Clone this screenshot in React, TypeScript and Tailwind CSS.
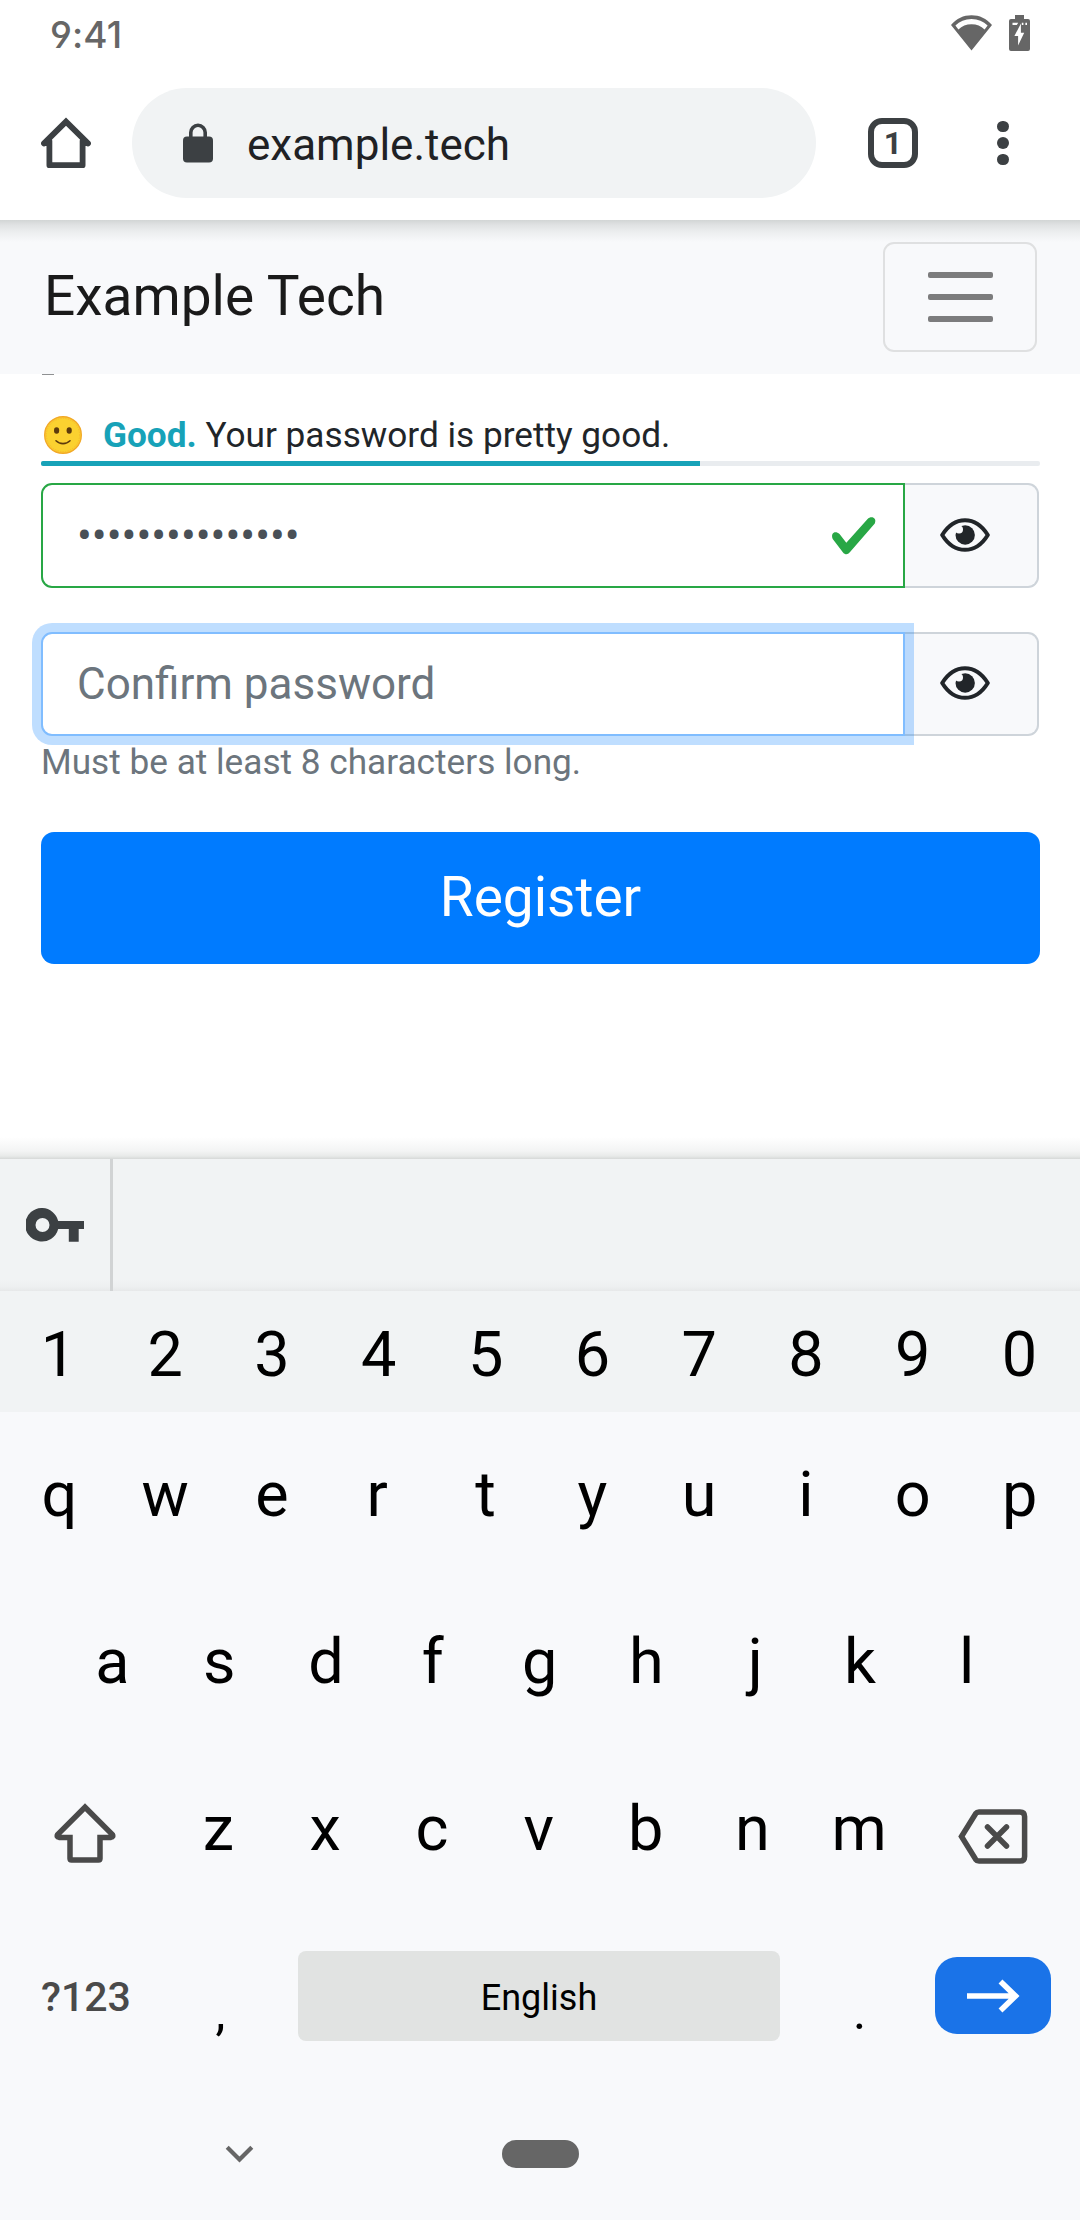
import React from "react";

const HomeIcon = () => (
  <svg className="h-[52px] w-[52px]" viewBox="0 0 52 52" fill="none" stroke="#3c4043" strokeWidth="5.8" strokeLinejoin="round" strokeLinecap="round">
    <path d="M4 26.4 26 4.6 48 26.4" strokeLinejoin="miter" />
    <path d="M9.4 24v24.2h33.2V24" />
    <path d="M5 27h4M43 27h4" strokeWidth="4" />
  </svg>
);

const LockIcon = () => (
  <svg className="h-10 w-[30px]" viewBox="0 0 30 40">
    <rect x="0" y="13.5" width="30" height="26" rx="4" fill="#3c4043" />
    <path d="M7.8 16V9.5a7.2 7.2 0 0 1 14.4 0V16" fill="none" stroke="#3c4043" strokeWidth="3.6" />
  </svg>
);

const WifiIcon = () => (
  <svg className="h-9 w-[41px]" viewBox="0 0 41 36">
    <path
      fillRule="evenodd"
      fill="#666"
      d="M20.5 35.5 0 10C5.500 3.500 12.500.300 20.500.300S35.500 3.500 41 10ZM7.400 14.600 4.400 10.500C8.600 6.200 14 4 20.500 4s11.900 2.200 16.100 6.500l-3 4.100C30 11 25.800 9.200 20.500 9.200S11 11 7.400 14.600Z"
    />
  </svg>
);

const BatteryIcon = () => (
  <svg className="h-9 w-[21px]" viewBox="0 0 21 36">
    <path d="M6 0h9v4H19a2 2 0 0 1 2 2v28a2 2 0 0 1-2 2H2a2 2 0 0 1-2-2V6a2 2 0 0 1 2-2h4Z" fill="#666" />
    <path d="M3.500 7.700h5.700l-1.400 2.200H3.500ZM12.800 7.700h1.600v2.200h-1.600ZM16.400 7.700H18v2.200h-1.600Z" fill="#fff" />
    <path d="M11.900 8.500v9.300h3.300L9.100 30.400v-9.300H5.400Z" fill="#fff" />
  </svg>
);

const EyeIcon = () => (
  <svg className="h-[34px] w-[50px]" viewBox="0 0 50 34">
    <path
      d="M2.200 17C8 7.600 15.800 2.200 25 2.200S42 7.600 47.800 17C42 26.400 34.200 31.800 25 31.800S8 26.400 2.200 17Z"
      fill="none"
      stroke="#212529"
      strokeWidth="4"
      strokeLinejoin="round"
    />
    <circle cx="25.200" cy="17" r="9.700" fill="#212529" />
    <circle cx="19" cy="11.500" r="4" fill="#f8f9fb" />
  </svg>
);

const CheckIcon = () => (
  <svg className="size-[49.5px]" viewBox="0 0 8 8">
    <path fill="#28a745" d="M2.300 6.730L.6 4.530c-.4-1.040.46-1.400 1.100-.8l1.100 1.400 3.400-3.800c.6-.63 1.600-.27 1.200.7l-4 4.600c-.43.5-.8.4-1.100.1z" />
  </svg>
);

const SmileIcon = () => (
  <svg className="size-[38px]" viewBox="0 0 38 38">
    <circle cx="19" cy="19" r="18.300" fill="#fbd130" stroke="#f2a928" strokeWidth="1.400" />
    <circle cx="19" cy="19" r="16.600" fill="none" stroke="#f5b92b" strokeWidth=".8" strokeDasharray="1.500 1" />
    <ellipse cx="12.600" cy="14.500" rx="2.600" ry="3.300" fill="#5c3a0c" />
    <ellipse cx="25.200" cy="14.500" rx="2.600" ry="3.300" fill="#5c3a0c" />
    <path d="M12 24.800c3.800 3.800 10.200 3.800 14 0" fill="none" stroke="#5c3a0c" strokeWidth="1.600" strokeLinecap="round" />
  </svg>
);

const KeyIcon = () => (
  <svg className="h-[34px] w-[58px]" viewBox="0 0 58 34">
    <path fillRule="evenodd" fill="#3c4043" d="M16.500 0a17 17 0 0 1 15.700 13H58v8h-5.300v12.700H42.800V21H32.200A16.800 16.800 0 1 1 16.500 0Zm0 10a7 7 0 1 0 0 14 7 7 0 0 0 0-14Z" />
  </svg>
);

const ShiftIcon = () => (
  <svg className="h-[60px] w-[62px]" viewBox="0 0 62 60" fill="none" stroke="#4a4a4a" strokeWidth="5.500">
    <path d="M31 4.200 3.600 31.600Q2.400 34 5 34.400H16V55.500q0 1.500 1.500 1.500h27q1.500 0 1.500-1.500V34.400H57Q59.600 34 58.400 31.600Z" />
  </svg>
);

const BackspaceIcon = () => (
  <svg className="h-[55px] w-[70px]" viewBox="0 0 70 55" fill="none" stroke="#4a4a4a" strokeWidth="5.500">
    <path d="M3.500 27.500 17.600 4.700Q18.900 2.900 21 2.900H62q4.600 0 4.600 4.600v40q0 4.600-4.600 4.600H21q-2.100 0-3.400-1.800Z" />
    <path d="M29.500 18 48.500 37M48.500 18 29.500 37" strokeLinecap="round" />
  </svg>
);

const ArrowIcon = () => (
  <svg className="h-[34px] w-[53px]" viewBox="0 0 53 34" fill="none" stroke="#fff" strokeWidth="5.600">
    <path d="M0 17H48M33.500 2.500 48.500 17l-15 14.500" />
  </svg>
);

// Narrow glyphs whose ink sits off the centre of the key
const nudge: Record<string, string> = { r: "pr-[3px]", j: "pl-1", q: "pl-[2px]" };

const Letter = ({ children }: { children: string }) => (
  <span className={`flex w-[106.800px] shrink-0 justify-center text-[63px] leading-[74px] text-black ${nudge[children] ?? ""}`}>
    {children}
  </span>
);

const LetterRow = ({ keys }: { keys: string }) => (
  <>
    {keys.split("").map((k) => (
      <Letter key={k}>{k}</Letter>
    ))}
  </>
);

const RevealButton = () => (
  <button className="flex w-[134px] items-center rounded-r-[11px] border-2 border-l-0 border-[#ced4da] bg-[#f8f9fb] pb-[2px] pl-[35px]">
    <EyeIcon />
  </button>
);

export default function App() {
  return (
    <div className="flex h-[2220px] w-[1080px] flex-col overflow-hidden bg-white font-['Roboto',sans-serif] text-[#212529]">
      {/* Status bar */}
      <div className="flex h-[66px] shrink-0 items-center justify-between pr-[50px] pl-[50px]">
        <span className="pt-[3px] font-['Inter',sans-serif] text-[37px] leading-[63px] font-medium tracking-[0.1px] text-[#666] [font-feature-settings:'cv04','case'_0,'calt'_0]">
          9:41
        </span>
        <div className="flex gap-[17px]">
          <WifiIcon />
          <BatteryIcon />
        </div>
      </div>

      {/* Browser toolbar */}
      <div className="flex h-[154px] shrink-0 items-start pt-[22px]">
        <div className="ml-10 flex h-[110px] items-center">
          <HomeIcon />
        </div>
        <div className="ml-10 flex h-[110px] w-[684px] items-center rounded-full bg-[#f1f3f4] pl-[51px]">
          <LockIcon />
          <span className="ml-[34px] pt-[3px] text-[44px] leading-[52px] text-[#202124]">example.tech</span>
        </div>
        <div className="ml-[52px] flex h-[110px] items-center">
          <div className="flex h-[50px] w-[50px] items-center justify-center rounded-[14px] border-[6px] border-[#3c4043] text-[32px] leading-[38px] font-bold text-[#3c4043]">
            1
          </div>
        </div>
        <div className="ml-[79px] flex h-[110px] flex-col items-center justify-center gap-[5px]">
          <span className="size-[11.500px] rounded-full bg-[#3c4043]" />
          <span className="size-[11.500px] rounded-full bg-[#3c4043]" />
          <span className="size-[11.500px] rounded-full bg-[#3c4043]" />
        </div>
      </div>

      {/* Site navbar */}
      <nav className="flex h-[154px] shrink-0 items-start justify-between bg-[#f8f9fb] bg-[linear-gradient(to_bottom,#d2d5d5_0px,#e0e2e3_5px,#eceeef_12px,#f8f9fb_22px)] bg-no-repeat pt-[22px] pr-[43px] pl-11">
        <span className="text-[55px] leading-[108px] text-[#1a1a1a]">Example Tech</span>
        <button className="flex h-[110px] w-[154px] flex-col items-center justify-center gap-4 rounded-[11px] border-2 border-[#dfe0e1]">
          <span className="h-[6px] w-[65px] rounded-[2px] bg-[#7c7c7d]" />
          <span className="h-[6px] w-[65px] rounded-[2px] bg-[#7c7c7d]" />
          <span className="h-[6px] w-[65px] rounded-[2px] bg-[#7c7c7d]" />
        </button>
      </nav>

      {/* Registration form */}
      <main className="flex h-[785px] shrink-0 flex-col bg-[linear-gradient(to_top,#d6d9d8_0px,#e8eae9_3px,#f3f4f4_8px,#ffffff_22px)] bg-no-repeat px-[41px]">
        <span className="ml-px h-px w-3 bg-[#8f9192]" />
        <div className="mt-[33px] flex h-[53px] items-center text-[35.200px] leading-[53px]">
          <span className="ml-[3px]">
            <SmileIcon />
          </span>
          <span className="ml-[21px] pt-[2px] whitespace-pre">
            <strong className="font-bold text-[#17a2b8]">Good.</strong> Your password is pretty good.
          </span>
        </div>
        <div className="h-[5px] w-[999px] overflow-hidden rounded-[2px] bg-[#e9ecef]">
          <div className="h-full w-[659px] bg-[#17a2b8]" />
        </div>

        <div className="mt-[17px] flex h-[105px]">
          <div className="flex w-[865px] items-center justify-between rounded-l-[11px] border-2 border-[#28a745] bg-white pr-[25px] pl-[34px] text-[44px] text-[#495057]">
            <span>•••••••••••••••</span>
            <CheckIcon />
          </div>
          <RevealButton />
        </div>

        <div className="mt-11 flex h-[104px]">
          <div className="relative flex w-[865px] items-center rounded-l-[11px] border-2 border-[#80bdff] bg-white pl-[34px] text-[44px] text-[#6c757d] shadow-[0_0_0_9px_rgba(0,123,255,0.25)]">
            Confirm password
          </div>
          <RevealButton />
        </div>
        <p className="text-[35.200px] leading-[52px] text-[#6c757d]">Must be at least 8 characters long.</p>

        <button className="mt-11 h-[132px] w-[999px] rounded-[13px] bg-[#007bff] pb-[2px] text-[55px] leading-[130px] text-white">Register</button>
      </main>

      {/* Keyboard suggestion strip */}
      <div className="flex h-[132px] shrink-0 bg-[linear-gradient(to_top,#e7e8e9_0px,#edeff0_4px,#f1f3f4_11px)] bg-no-repeat">
        <div className="flex w-[113px] items-center border-r-[3px] border-[#d1d3d4] pl-[26px]">
          <KeyIcon />
        </div>
      </div>

      {/* Keyboard */}
      <div className="flex h-[121px] shrink-0 items-center bg-[#f1f3f4] pt-[6px] pl-[5px]">
        <LetterRow keys="1234567890" />
      </div>
      <div className="flex flex-1 flex-col bg-[#f8f9fb]">
        <div className="flex h-[166px] items-center pl-[5px]">
          <LetterRow keys="qwertyuiop" />
        </div>
        <div className="flex h-[167px] items-center pl-[59px]">
          <LetterRow keys="asdfghjkl" />
        </div>
        <div className="flex h-[168px] items-center">
          <div className="flex w-[165px] shrink-0 pt-2 pl-[54px]">
            <ShiftIcon />
          </div>
          <LetterRow keys="zxcvbnm" />
          <div className="pt-[14px] pl-[45px]">
            <BackspaceIcon />
          </div>
        </div>
        <div className="flex h-[166px] items-center">
          <span className="w-[173px] pt-px pl-[41px] text-[41px] leading-[48px] font-medium text-[#4a4a4a]">?123</span>
          <span className="w-[95px] pt-[31px] text-center text-[50px] leading-[58px] text-black">,</span>
          <div className="ml-[30px] flex h-[90px] w-[482px] items-center justify-center rounded-[8px] bg-[#e1e3e2] pt-[3px] text-[36px] leading-[42px] text-black">
            English
          </div>
          <span className="ml-[30px] w-[99px] pt-[31px] text-center text-[50px] leading-[58px] text-black">.</span>
          <button className="mb-px ml-[26px] flex h-[77px] w-[116px] items-center justify-center rounded-[22px] bg-[#1a73e8]">
            <ArrowIcon />
          </button>
        </div>

        {/* System navigation */}
        <div className="flex h-[140px] items-center">
          <svg className="mt-[10px] ml-[225px] h-[18px] w-[29px]" viewBox="0 0 29 18" fill="none" stroke="#666" strokeWidth="4.200">
            <path d="M2.200 2.200 14.500 14.500 26.800 2.200" />
          </svg>
          <span className="mt-[10px] ml-[248px] h-[28px] w-[77px] rounded-full bg-[#666]" />
        </div>
      </div>
    </div>
  );
}
